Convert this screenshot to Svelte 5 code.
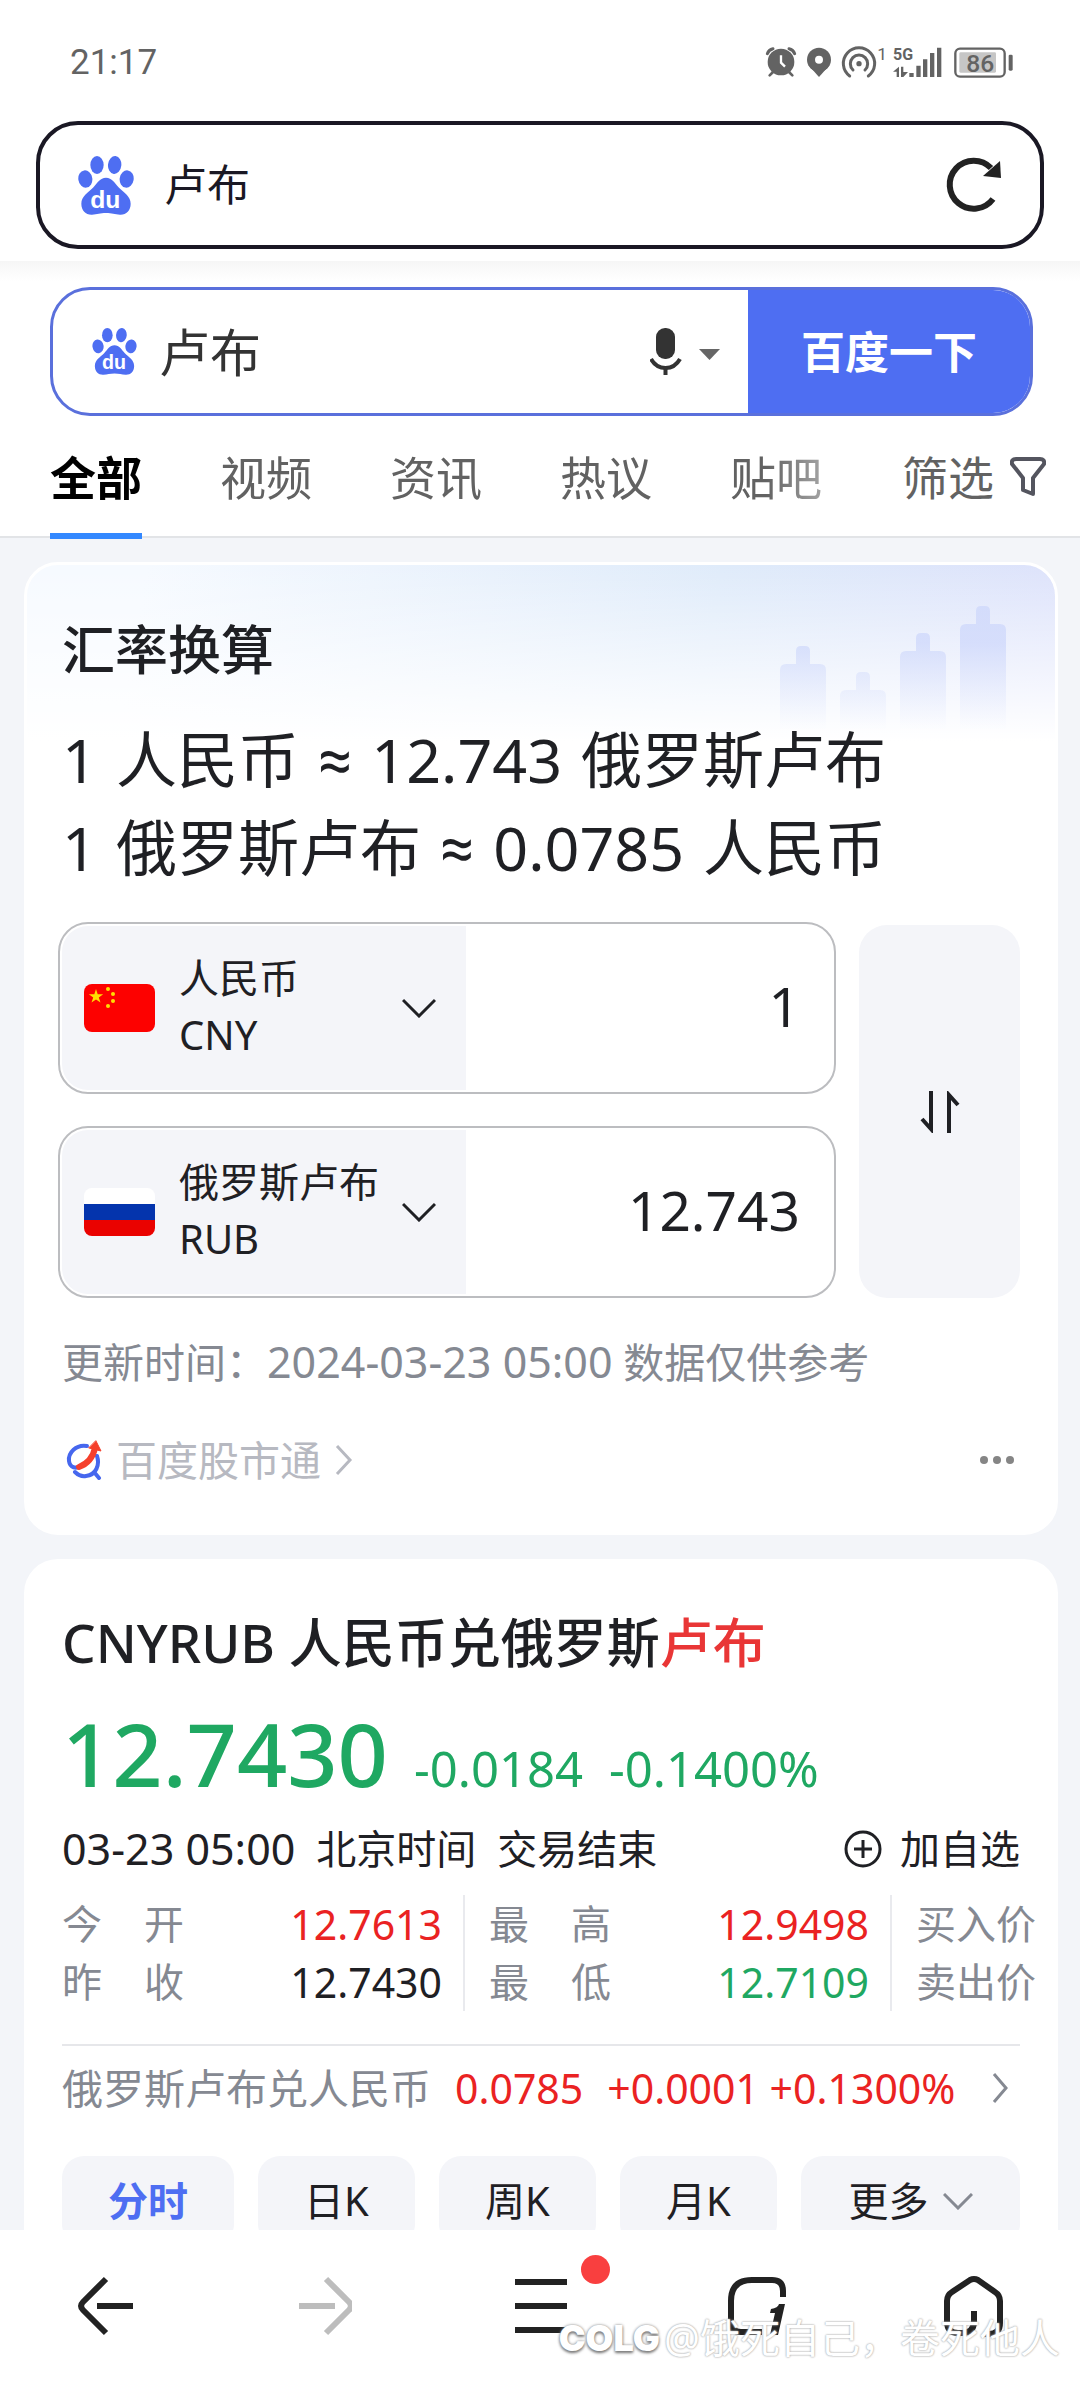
<script lang="ts">
  interface Currency {
    code: string
    name: string
  }

  const currencies: Currency[] = [
    { code: 'CNY', name: '人民币' },
    { code: 'RUB', name: '俄罗斯卢布' },
  ]

  const rates = [
    ['1', '人民币', '≈', '12.743', '俄罗斯卢布'],
    ['1', '俄罗斯卢布', '≈', '0.0785', '人民币'],
  ]

  const tabs = ['全部', '视频', '资讯', '热议', '贴吧']
  const periods = ['分时', '日K', '周K', '月K']

  // x offset and top of each candle in the card header artwork
  const candles = [
    { x: 0, y: 40 },
    { x: 60, y: 66 },
    { x: 120, y: 27 },
    { x: 180, y: 0 },
  ]

  let query = $state('卢布')
  let activeTab = $state('全部')
  let activePeriod = $state('分时')
  let rows = $state([
    { code: 'CNY', amount: '1' },
    { code: 'RUB', amount: '12.743' },
  ])

  function swap() {
    rows = [rows[1], rows[0]]
  }
</script>

{#snippet paw()}
  <svg class="paw" viewBox="54 47 168 177" aria-hidden="true">
    <g fill="#4e6ef2">
      <ellipse cx="76" cy="116" rx="21" ry="26" transform="rotate(-8 76 116)" />
      <ellipse cx="111" cy="74" rx="20" ry="27" />
      <ellipse cx="164" cy="74" rx="20" ry="27" transform="rotate(6 164 74)" />
      <ellipse cx="200" cy="116" rx="21" ry="26" transform="rotate(8 200 116)" />
      <path
        d="M138 112C120 112 112 128 99 142C84 157 64 167 64 190C64 211 78 224 96 223C112 222 120 218 138 218C156 218 164 222 180 223C198 224 212 211 212 190C212 167 192 157 177 142C164 128 156 112 138 112Z"
      />
    </g>
    <text x="136" y="203" text-anchor="middle" font-size="74" font-weight="700" fill="#fff">du</text>
  </svg>
{/snippet}

{#snippet flag(code: string)}
  <svg class="flag" viewBox="0 0 71 48" aria-hidden="true">
    {#if code === 'CNY'}
      <rect width="71" height="48" rx="8" fill="#fd0100" />
      <g fill="#ffde00">
        <path d="M12 5l1.700 5.200h5.500l-4.400 3.200 1.700 5.200-4.500-3.200-4.500 3.200 1.700-5.200-4.400-3.200h5.500z" />
        <circle cx="24" cy="5" r="2" />
        <circle cx="29" cy="10" r="2" />
        <circle cx="29" cy="17" r="2" />
        <circle cx="24" cy="22" r="2" />
      </g>
    {:else}
      <path d="M0 16V8a8 8 0 0 1 8-8h55a8 8 0 0 1 8 8v8z" fill="#fff" />
      <path d="M0 16h71v16H0z" fill="#0434ad" />
      <path d="M0 32h71v8a8 8 0 0 1-8 8H8a8 8 0 0 1-8-8z" fill="#ea0200" />
    {/if}
  </svg>
{/snippet}

<div class="page">
  <header class="browser">
    <div class="status">
      <time>21:17</time>
      <svg width="248" height="36" viewBox="72 76 744 108" aria-hidden="true">
        <g fill="#636363">
          <circle cx="120" cy="127" r="40" />
          <circle cx="234" cy="120" r="36" />
          <path d="M202 136h64l-32 36z" />
          <circle cx="354" cy="132" r="8" />
          <path d="M505 160h13v12h-13zM526 138h13v34h-13zM546 119h13v53h-13zM567 100h13v72h-13zM588 84h13v88h-13z" />
          <path d="M456 156l18-15v31h-7v-16zM480 141h7v16h14l-14 15h-7z" />
          <rect x="803" y="105" width="12" height="48" rx="4" />
        </g>
        <g fill="none" stroke="#636363" stroke-width="9" stroke-linecap="round">
          <path d="M79 102q4-12 17-15M161 102q-4-12-17-15" />
          <path d="M86 167l10-10M154 167l-10-10" stroke-width="8" />
          <path d="M326 169a47 47 0 1 1 56 0" />
          <path d="M336 151a26 26 0 1 1 36 0" />
        </g>
        <path d="M120 107v22l12 12" fill="none" stroke="#fff" stroke-width="7" />
        <circle cx="234" cy="120" r="12" fill="#fff" />
        <rect x="643" y="87" width="148" height="84" rx="14" fill="none" stroke="#636363" stroke-width="7" />
        <rect x="655" y="98" width="110" height="61" rx="4" fill="#c6c6c6" />
        <g class="status-text" fill="#636363">
          <text x="409" y="121" font-size="52">1</text>
          <text x="456" y="122" font-size="48" font-weight="700">5G</text>
          <text x="676" y="156" font-size="74" font-weight="500">86</text>
        </g>
      </svg>
    </div>

    <div class="omnibox">
      {@render paw()}
      <input type="text" aria-label="地址栏" bind:value={query} />
      <button class="icon-btn" aria-label="刷新">
        <svg width="60" height="58" viewBox="0 0 60 58" fill="none" aria-hidden="true">
          <path d="M47 43A24 24 0 1 1 45 12" stroke="#222" stroke-width="6" />
          <path d="M54 5l1 17-18-2z" fill="#222" />
        </svg>
      </button>
    </div>
  </header>

  <main>
    <section class="search">
      <form onsubmit={(e) => e.preventDefault()}>
        {@render paw()}
        <input type="text" aria-label="搜索" bind:value={query} />
        <button type="button" class="voice" aria-label="语音搜索">
          <svg width="70" height="48" viewBox="0 0 70 48" aria-hidden="true">
            <rect x="6" y="0" width="19" height="31" rx="9" fill="#333" />
            <path d="M1 31q5 9 14.500 9T30 31" fill="none" stroke="#333" stroke-width="4" />
            <path d="M15.500 39v8" stroke="#333" stroke-width="4" />
            <path d="M49 21h21L59.500 32z" fill="#666" />
          </svg>
        </button>
        <button class="submit">百度一下</button>
      </form>
      <nav class="tabs">
        <div class="tab-list">
          {#each tabs as tab}
            <button class:active={tab === activeTab} onclick={() => (activeTab = tab)}>{tab}</button>
          {/each}
        </div>
        <button class="filter">
          筛选
          <svg width="36" height="40" viewBox="0 0 36 40" fill="none" stroke="#54555f" stroke-width="4" stroke-linejoin="round" aria-hidden="true">
            <path d="M6 2h24q5 0 4 5l-11 14v16l-10-4V21L2 7Q1 2 6 2z" />
          </svg>
        </button>
      </nav>
    </section>

    <article class="card rate">
      <svg class="candles" viewBox="0 0 226 124" aria-hidden="true">
        <defs>
          <linearGradient id="candle" gradientUnits="userSpaceOnUse" x1="0" y1="0" x2="0" y2="124">
            <stop offset="0.300" stop-color="#ccd6fb" stop-opacity="0.700" />
            <stop offset="1" stop-color="#d8e0fc" stop-opacity="0" />
          </linearGradient>
        </defs>
        {#each candles as c}
          <path
            d="M{c.x} 124V{c.y + 24}q0-6 6-6h10V{c.y + 5}q0-5 5-5h4q5 0 5 5v13h10q6 0 6 6V124z"
            fill="url(#candle)"
          />
        {/each}
      </svg>
      <h2>汇率换算</h2>
      {#each rates as parts}
        <p class="rate-line">
          {#each parts as part}
            <span class:approx={part === '≈'}>{part}</span>
          {/each}
        </p>
      {/each}

      <div class="converter">
        <div class="fields">
          {#each rows as row}
            <div class="field">
              <label class="currency">
                {@render flag(row.code)}
                <span class="names">
                  <select bind:value={row.code}>
                    {#each currencies as c}
                      <option value={c.code}>{c.name}</option>
                    {/each}
                  </select>
                  <span>{row.code}</span>
                </span>
                <svg width="34" height="20" viewBox="0 0 34 20" fill="none" stroke="#1f2024" stroke-width="3" aria-hidden="true">
                  <path d="M1 2l16 16L33 2" />
                </svg>
              </label>
              <input type="text" inputmode="decimal" aria-label="{row.code} 金额" bind:value={row.amount} />
            </div>
          {/each}
        </div>
        <button class="swap" aria-label="互换" onclick={swap}>
          <svg width="40" height="42" viewBox="0 0 40 42" fill="none" stroke="#1f2024" stroke-width="4" aria-hidden="true">
            <path d="M2 28l9 10V0M29 42V4l9 10" />
          </svg>
        </button>
      </div>

      <p class="updated">更新时间：<span>2024-03-23 05:00</span> 数据仅供参考</p>

      <footer>
        <a href="#gushitong">
          <svg width="36" height="40" viewBox="0 0 36 40" fill="none" stroke-linecap="round" aria-hidden="true">
            <path d="M21 6C10 4 2 13 3 21c1 7 7 8 12 5" stroke="#4667ee" stroke-width="4" />
            <path d="M31 16c3 9-1 19-11 20q-6 1-11-4M28 32l5 6" stroke="#4667ee" stroke-width="4" />
            <path d="M13 27Q26 22 29 8" stroke="#f5402c" stroke-width="6" />
            <path d="M30 1l5 10-12-3z" fill="#f5402c" stroke="#f5402c" />
          </svg>
          百度股市通
          <svg width="18" height="32" viewBox="0 0 18 32" fill="none" stroke="#b7b9c1" stroke-width="3" aria-hidden="true">
            <path d="M2 2l13 14L2 30" />
          </svg>
        </a>
        <button class="icon-btn" aria-label="更多操作">
          <svg width="36" height="10" viewBox="0 0 36 10" fill="#858585" aria-hidden="true">
            <circle cx="5" cy="5" r="4" />
            <circle cx="18" cy="5" r="4" />
            <circle cx="31" cy="5" r="4" />
          </svg>
        </button>
      </footer>
    </article>

    <article class="card quote">
      <h2>CNYRUB 人民币兑俄罗斯<em>卢布</em></h2>
      <p class="price down">
        <strong>12.7430</strong>
        <span>-0.0184</span>
        <span>-0.1400%</span>
      </p>
      <div class="session">
        <span class="session-time">03-23 05:00</span>
        <span>北京时间</span>
        <span>交易结束</span>
        <button class="watch">
          <svg width="38" height="38" viewBox="0 0 38 38" fill="none" stroke="#1f2024" stroke-width="3" aria-hidden="true">
            <circle cx="19" cy="19" r="17" />
            <path d="M19 10v18M10 19h18" />
          </svg>
          加自选
        </button>
      </div>

      <div class="stats">
        <table>
          <tbody>
            <tr>
              <th scope="row"><span>今</span><span>开</span></th>
              <td class="up">12.7613</td>
              <th scope="row"><span>最</span><span>高</span></th>
              <td class="up">12.9498</td>
              <th scope="row"><span>买入价</span></th>
            </tr>
            <tr>
              <th scope="row"><span>昨</span><span>收</span></th>
              <td>12.7430</td>
              <th scope="row"><span>最</span><span>低</span></th>
              <td class="down">12.7109</td>
              <th scope="row"><span>卖出价</span></th>
            </tr>
          </tbody>
        </table>
      </div>

      <a class="inverse" href="#rubcny">
        <span class="pair">俄罗斯卢布兑人民币</span>
        <span>0.0785</span>
        <span>+0.0001 +0.1300%</span>
        <svg width="18" height="32" viewBox="0 0 18 32" fill="none" stroke="#858992" stroke-width="3" aria-hidden="true">
          <path d="M2 2l12 14L2 30" />
        </svg>
      </a>

      <div class="periods">
        {#each periods as period}
          <button class:active={period === activePeriod} onclick={() => (activePeriod = period)}>{period}</button>
        {/each}
        <button class="more">
          更多
          <svg width="30" height="17" viewBox="0 0 30 17" fill="none" stroke="#858992" stroke-width="3" aria-hidden="true">
            <path d="M1 1l14 14L29 1" />
          </svg>
        </button>
      </div>
    </article>
  </main>

  <nav class="toolbar">
    <button class="icon-btn" aria-label="后退">
      <svg width="60" height="60" viewBox="0 0 60 60" fill="none" stroke="#222" stroke-width="6" aria-hidden="true">
        <path d="M31 3L8 26q-4 4 0 8l23 23M22 30h36" />
      </svg>
    </button>
    <button class="icon-btn" aria-label="前进" disabled>
      <svg width="60" height="60" viewBox="0 0 60 60" fill="none" stroke="#bdbdbd" stroke-width="6" aria-hidden="true">
        <path d="M34 3l23 23q4 4 0 8L34 57M7 30h36" />
      </svg>
    </button>
    <button class="icon-btn menu" aria-label="菜单">
      <svg width="60" height="60" viewBox="0 0 60 60" fill="none" stroke="#222" stroke-width="6" aria-hidden="true">
        <path d="M6 6h52M6 30h52M6 54h52" />
      </svg>
      <span class="dot"></span>
    </button>
    <button class="icon-btn" aria-label="标签页 1">
      <svg width="60" height="60" viewBox="0 0 60 60" aria-hidden="true">
        <path d="M36 56H15Q5 56 5 46V25Q5 4 26 4h20q11 0 11 11v6" fill="none" stroke="#222" stroke-width="6" />
        <path d="M45 33q7-1 8-5h6l-7 31h-8l5-22h-5z" fill="#222" />
      </svg>
    </button>
    <button class="icon-btn" aria-label="主页">
      <svg width="60" height="62" viewBox="0 0 60 62" fill="none" stroke="#222" stroke-width="6" aria-hidden="true">
        <path d="M31 36v10q0 12-12 12h-4Q4 58 4 46V26q0-6 5-9L27 5q4-2 8 0l17 12q5 3 5 9v22q0 11-11 11h-5" />
      </svg>
    </button>
    <p class="watermark"><b>COLG</b>@饿死自己，卷死他人</p>
  </nav>
</div>

<style>
  :global(body) {
    margin: 0;
  }

  .page {
    display: flex;
    flex-direction: column;
    height: 100vh;
    overflow: hidden;
    background: #fff;
    color: #1f2024;
    font-family: 'Noto Sans', 'Noto Sans CJK SC', sans-serif;
    font-size: 40px;
    line-height: 60px;
  }

  h2,
  p {
    margin: 0;
  }

  button,
  input,
  select {
    margin: 0;
    padding: 0;
    border: 0;
    background: none;
    color: inherit;
    font: inherit;
  }

  button {
    cursor: pointer;
  }

  input:focus,
  select:focus {
    outline: none;
  }

  a {
    color: inherit;
    text-decoration: none;
  }

  svg {
    display: block;
    flex: none;
  }

  .paw text {
    font-family: 'Liberation Sans', sans-serif;
  }

  .icon-btn {
    display: flex;
    align-items: center;
  }

  /* browser chrome */
  .browser {
    padding-bottom: 12px;
  }

  .status {
    display: flex;
    align-items: center;
    justify-content: space-between;
    box-sizing: border-box;
    height: 121px;
    padding: 4px 67px 0 70px;
    color: #636363;
    font-family: Roboto, sans-serif;
    font-size: 35px;
  }

  .status-text {
    font-family: Roboto, sans-serif;
  }

  .omnibox {
    display: flex;
    align-items: center;
    box-sizing: border-box;
    height: 128px;
    margin: 0 36px;
    padding: 0 34px 0 38px;
    border: 4px solid #1a1824;
    border-radius: 42px;
    color: #1a1824;
    font-size: 43px;
  }

  .omnibox .paw {
    width: 56px;
    height: 59px;
  }

  .omnibox input {
    flex: 1;
    min-width: 0;
    margin-left: 30px;
  }

  /* search area */
  .search {
    padding-top: 26px;
    background: #fff linear-gradient(#f6f6f6, #fff 20px);
    border-bottom: 2px solid #e2e4e7;
  }

  form {
    display: flex;
    align-items: center;
    box-sizing: border-box;
    height: 129px;
    margin: 0 47px 0 50px;
    padding-left: 39px;
    overflow: hidden;
    border: 3px solid #5a70dc;
    border-radius: 40px;
    color: #333;
    font-size: 51px;
  }

  form .paw {
    width: 45px;
    height: 47px;
  }

  form input {
    flex: 1;
    min-width: 0;
    margin-left: 22px;
  }

  .voice {
    margin-right: 28px;
  }

  .submit {
    align-self: stretch;
    width: 282px;
    background: #4e6ef2;
    color: #fff;
    font-size: 44px;
    font-weight: 700;
  }

  .tabs {
    display: flex;
    justify-content: space-between;
    height: 120px;
    padding: 0 34px 0 50px;
    color: #626262;
    font-size: 46px;
  }

  .tab-list {
    display: flex;
    flex: 1;
    gap: 78px;
    margin-bottom: -3px;
    mask-image: linear-gradient(to right, #000 84%, transparent);
  }

  .tab-list button {
    flex: none;
    padding-top: 4px;
    border-bottom: 6px solid transparent;
  }

  .tab-list .active {
    border-color: #3388ff;
    color: #000;
    font-weight: 700;
  }

  .filter {
    display: flex;
    align-items: center;
    gap: 16px;
    padding-top: 2px;
  }

  /* results */
  main {
    flex: 1;
    min-height: 0;
    overflow: hidden;
    background: #f3f5f9;
  }

  .card {
    position: relative;
    margin: 24px 22px 0 24px;
    border-radius: 34px;
    background: #fff;
  }

  .card h2 {
    font-size: 53px;
    font-weight: 500;
  }

  .rate {
    box-sizing: border-box;
    padding: 55px 35px 42px 31px;
    border: 3px solid #fff;
    background:
      linear-gradient(rgba(255, 255, 255, 0), #fff 176px),
      linear-gradient(100deg, #f6faff 10%, #dfebfa 58%, #dde2fb 88%, #e4e5fa);
  }

  .candles {
    position: absolute;
    top: 41px;
    right: 49px;
    width: 226px;
  }

  .rate h2 {
    margin: 0 0 36px 4px;
  }

  .rate-line {
    display: flex;
    gap: 19px;
    margin-left: 4px;
    font-size: 61px;
    line-height: 88px;
  }

  .approx {
    font-family: Roboto, sans-serif;
  }

  .converter {
    display: flex;
    gap: 23px;
    margin-top: 30px;
  }

  .fields {
    display: flex;
    flex: 1;
    flex-direction: column;
    gap: 32px;
    min-width: 0;
  }

  .field {
    display: flex;
    box-sizing: border-box;
    height: 172px;
    padding: 2px;
    border: 2px solid #bcbdc0;
    border-radius: 30px;
  }

  .currency {
    display: flex;
    align-items: center;
    box-sizing: border-box;
    width: 404px;
    padding: 0 30px 0 22px;
    border-radius: 26px 0 0 26px;
    background: #f4f5f9;
  }

  .flag {
    width: 71px;
    height: 48px;
  }

  .names {
    display: flex;
    flex: 1;
    flex-direction: column;
    margin-left: 24px;
    padding-bottom: 4px;
    line-height: 57px;
  }

  select {
    width: 206px;
    height: 57px;
    appearance: none;
  }

  .field > input {
    flex: 1;
    min-width: 0;
    padding: 0 32px 4px 0;
    font-size: 55px;
    text-align: right;
  }

  .swap {
    display: flex;
    align-items: center;
    justify-content: center;
    width: 161px;
    margin-top: 3px;
    border-radius: 28px;
    background: #f4f5f9;
  }

  .updated {
    margin: 34px 0 0 4px;
    color: #858992;
    font-size: 41px;
  }

  .updated span {
    font-size: 43px;
  }

  .rate footer {
    display: flex;
    align-items: center;
    justify-content: space-between;
    margin: 38px 5px 0 8px;
    color: #b7b9c1;
    font-size: 41px;
  }

  .rate footer a {
    display: flex;
    align-items: center;
    gap: 14px;
  }

  .quote {
    padding: 54px 38px 60px;
  }

  .quote em {
    color: #e93636;
    font-style: normal;
  }

  .up {
    color: #ea2222;
  }

  .down {
    color: #1fa862;
  }

  .price {
    display: flex;
    align-items: baseline;
    gap: 26px;
    margin-top: 32px;
    font-size: 49px;
  }

  .price strong {
    font-size: 88px;
    font-weight: 500;
    line-height: 96px;
  }

  .session {
    display: flex;
    align-items: center;
    gap: 21px;
    margin-top: 18px;
  }

  .session-time {
    font-size: 43px;
  }

  .watch {
    display: flex;
    align-items: center;
    gap: 18px;
    margin-left: auto;
  }

  /* the last column runs past the card padding */
  .stats {
    margin: 16px -18px 0 0;
  }

  table {
    width: 100%;
    border-spacing: 0;
    table-layout: fixed;
    line-height: 58px;
  }

  th {
    box-sizing: border-box;
    width: 148px;
    padding: 0 0 0 24px;
    border-left: 2px solid #e9eaee;
    color: #858992;
    font-weight: 400;
    white-space: nowrap;
  }

  th:first-child {
    width: 122px;
    padding-left: 0;
    border-left: 0;
  }

  th span {
    float: left;
  }

  th span + span {
    float: right;
  }

  td {
    padding: 0 21px 0 0;
    font-size: 41px;
    text-align: right;
  }

  .inverse {
    display: flex;
    align-items: center;
    gap: 24px;
    margin-top: 33px;
    padding-top: 12px;
    border-top: 2px solid #e6e7ea;
    color: #ea2222;
    font-size: 41px;
  }

  .pair {
    color: #858992;
  }

  .inverse svg {
    margin: 0 10px 0 auto;
  }

  .periods {
    display: flex;
    gap: 24px;
    margin-top: 38px;
  }

  .periods button {
    flex: 157;
    height: 90px;
    border-radius: 22px;
    background: #f4f5f9;
    font-size: 40px;
  }

  .periods .active {
    flex: 172;
    color: #4e6ef2;
    font-weight: 700;
  }

  .periods .more {
    display: flex;
    flex: 219;
    align-items: center;
    justify-content: center;
    gap: 14px;
  }

  /* bottom toolbar */
  .toolbar {
    position: relative;
    display: flex;
    align-items: center;
    justify-content: space-between;
    box-sizing: border-box;
    height: 152px;
    padding: 0 77px 0 75px;
    background: #fff;
  }

  .menu {
    position: relative;
  }

  .dot {
    position: absolute;
    top: -21px;
    right: -41px;
    width: 29px;
    height: 29px;
    border-radius: 50%;
    background: #f93f3f;
  }

  .watermark {
    position: absolute;
    right: 20px;
    bottom: 14px;
    display: flex;
    align-items: center;
    gap: 4px;
    color: #fff;
    text-shadow:
      0 0 2px #aaa,
      0 0 2px #bbb;
  }

  .watermark b {
    font-family: Inter, sans-serif;
    font-size: 36px;
    font-weight: 900;
    text-shadow:
      0 0 3px #888,
      0 2px 3px #777;
  }
</style>
